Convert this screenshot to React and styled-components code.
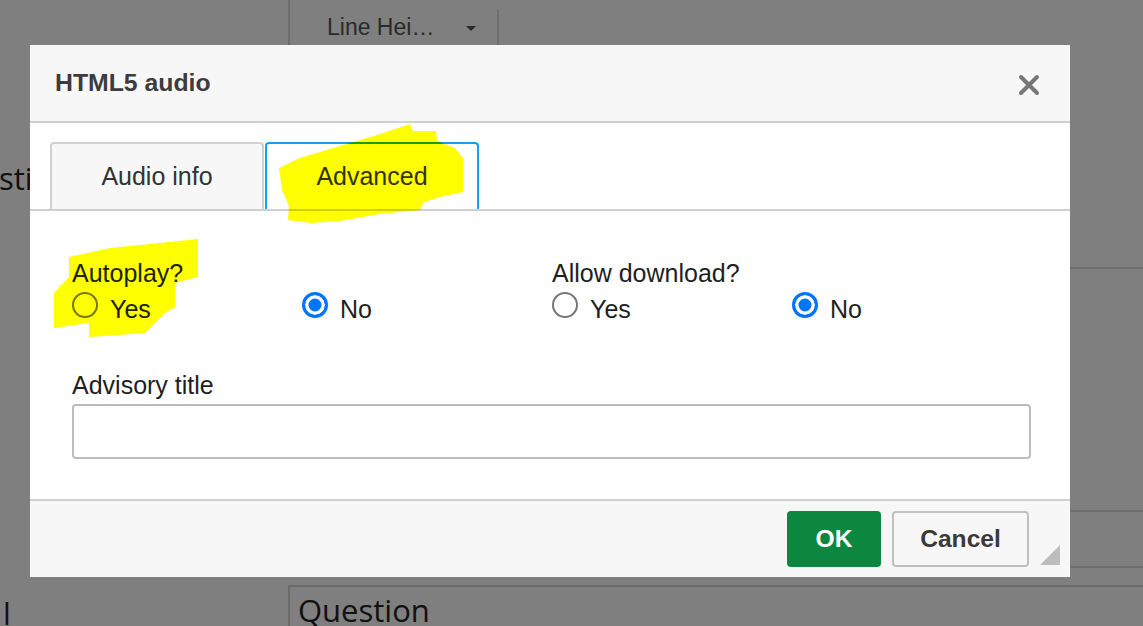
import styled, { createGlobalStyle } from 'styled-components'

const GlobalStyle = createGlobalStyle`
    html, body {
        margin: 0;
        height: 100%;
        overflow: hidden;
        background: #ffffff;
    }
    * {
        box-sizing: border-box;
    }
`

/* ---------- page behind the modal ---------- */

const Page = styled.div`
    display: grid;
    grid-template-columns: 288px 1fr;
    height: 626px;
    background: #ffffff;
    font-family: "Open Sans", sans-serif;
    color: #222;
    overflow: hidden;
`

const Sidebar = styled.aside`
    display: flex;
    flex-direction: column;
    justify-content: space-between;
    padding: 158px 0 0 0;
    font-size: 31px;
    line-height: 40px;
`

const SideText = styled.div`
    margin-left: ${p => p.$indent || 0}px;
    white-space: nowrap;
`

const Main = styled.section`
    display: flex;
    flex-direction: column;
`

const Toolbar = styled.div`
    display: flex;
    height: 45px;
    flex-shrink: 0;
    font-family: "Liberation Sans", Arial, sans-serif;
`

const Separator = styled.div`
    width: 2px;
    margin-top: ${p => p.$offset || 0}px;
    background: #dcdcdc;
`

const Dropdown = styled.div`
    display: flex;
    align-items: flex-start;
    width: 207px;
    padding: 14px 0 0 37px;
    font-size: 23px;
    color: #555;
    gap: 32px;
`

const Caret = styled.span`
    margin-top: 12px;
    width: 0;
    height: 0;
    border-left: 5px solid transparent;
    border-right: 5px solid transparent;
    border-top: 5px solid #555;
`

const Block = styled.div`
    height: ${p => p.$h}px;
    flex-shrink: 0;
    border-bottom: 2px solid #dcdcdc;
`

const QuestionBox = styled.div`
    margin-top: 17px;
    border: 2px solid #d6d6d6;
    border-right: none;
    flex: 1;
    padding: 2px 0 0 8px;
    font-size: 31px;
    color: #222;
`

const Overlay = styled.div`
    position: fixed;
    inset: 0;
    background: rgba(0, 0, 0, 0.5);
`

/* ---------- modal dialog ---------- */

const Dialog = styled.div`
    position: fixed;
    left: 30px;
    top: 45px;
    width: 1040px;
    height: 532px;
    display: flex;
    flex-direction: column;
    background: #ffffff;
    font-family: "Liberation Sans", Arial, sans-serif;
    color: #222;
`

const Header = styled.header`
    display: flex;
    align-items: center;
    justify-content: space-between;
    height: 78px;
    padding: 0 30px 0 25px;
    background: #f7f7f7;
    border-bottom: 2px solid #d0d0d0;
`

const Title = styled.h1`
    margin: 0;
    font-size: 24.8px;
    font-weight: 700;
    color: #3c3c3c;
`

const CloseButton = styled.button`
    display: flex;
    padding: 0;
    margin-top: 4px;
    border: none;
    background: none;
    cursor: pointer;
`

const TabBar = styled.div`
    display: flex;
    gap: 1px;
    padding: 19px 0 0 20px;
    border-bottom: 2px solid #d0d0d0;
`

const Tab = styled.button`
    width: 214px;
    height: 67px;
    display: flex;
    align-items: center;
    justify-content: center;
    border: 2px solid ${p => (p.$active ? '#149ff5' : '#d0d0d0')};
    border-bottom: none;
    border-radius: 4px 4px 0 0;
    background: ${p => (p.$active ? '#ffffff' : '#f7f7f7')};
    font-family: inherit;
    font-size: 25px;
    color: #333;
    cursor: pointer;
`

const Content = styled.div`
    flex: 1;
    padding: 48px 39px 0 42px;
`

const FieldRow = styled.div`
    display: grid;
    grid-template-columns: 480px 1fr;
`

const Label = styled.div`
    font-size: 25px;
    line-height: 28px;
    color: #1e1e1e;
`

const Options = styled.div`
    display: grid;
    grid-template-columns: ${p => p.$split}px 1fr;
    margin-top: 5px;
`

const Option = styled.label`
    display: flex;
    align-items: flex-end;
    font-size: 25px;
    line-height: 28px;
    color: #1e1e1e;
`

const Radio = styled.input.attrs({ type: 'radio' })`
    appearance: none;
    width: 26px;
    height: 26px;
    margin: 0 12px 5px 0;
    border: 2px solid #767676;
    border-radius: 50%;
    background: #ffffff;
    flex-shrink: 0;

    &:checked {
        border: 3px solid #0075ff;
        background: #0075ff;
        box-shadow: inset 0 0 0 3.5px #ffffff;
    }
`

const TitleField = styled.div`
    margin-top: 48px;
`

const TextInput = styled.input`
    display: block;
    width: 959px;
    height: 55px;
    margin-top: 5px;
    border: 2px solid #bdbdbd;
    border-radius: 4px;
    font-size: 22px;
    padding: 0 12px;
`

const Footer = styled.footer`
    position: relative;
    display: flex;
    align-items: center;
    justify-content: flex-end;
    gap: 11px;
    height: 78px;
    padding: 0 41px 0 0;
    background: #f7f7f7;
    border-top: 2px solid #d0d0d0;
`

const Button = styled.button`
    height: 56px;
    width: ${p => (p.$primary ? 94 : 137)}px;
    border: ${p => (p.$primary ? 'none' : '2px solid #c0c0c0')};
    border-radius: 4px;
    background: ${p => (p.$primary ? '#0b873f' : '#f7f7f7')};
    color: ${p => (p.$primary ? '#ffffff' : '#3a3a3a')};
    font-family: inherit;
    font-size: 24.6px;
    font-weight: 700;
    cursor: pointer;
`

const Grip = styled.div`
    position: absolute;
    right: 10px;
    bottom: 12px;
    width: 20px;
    height: 20px;
    background: #bdbdbd;
    clip-path: polygon(100% 0, 100% 100%, 0 100%);
`

const Highlight = styled.svg`
    position: fixed;
    inset: 0;
    width: 1143px;
    height: 626px;
    pointer-events: none;
    mix-blend-mode: multiply;
`

function RadioGroup({ label, name, split, value }) {
    return (
        <div>
            <Label>{label}</Label>
            <Options $split={split}>
                <Option>
                    <Radio name={name} defaultChecked={value === 'yes'} />
                    Yes
                </Option>
                <Option>
                    <Radio name={name} defaultChecked={value === 'no'} />
                    No
                </Option>
            </Options>
        </div>
    )
}

export default function App() {
    return (
        <>
            <GlobalStyle />
            <Page>
                <Sidebar>
                    <SideText $indent={-1}>stic</SideText>
                    <SideText $indent={3}>l</SideText>
                </Sidebar>
                <Main>
                    <Toolbar>
                        <Separator />
                        <Dropdown>
                            <span>Line Hei…</span>
                            <Caret />
                        </Dropdown>
                        <Separator $offset={10} />
                    </Toolbar>
                    <Block $h={224} />
                    <Block $h={243} />
                    <Block $h={56} />
                    <QuestionBox>Question</QuestionBox>
                </Main>
            </Page>
            <Overlay />

            <Dialog>
                <Header>
                    <Title>HTML5 audio</Title>
                    <CloseButton aria-label="Close">
                        <svg width="22" height="22" viewBox="0 0 22 22">
                            <path d="M3 3 L19 19 M19 3 L3 19" stroke="#777" strokeWidth="4" strokeLinecap="round" />
                        </svg>
                    </CloseButton>
                </Header>

                <TabBar>
                    <Tab>Audio info</Tab>
                    <Tab $active>Advanced</Tab>
                </TabBar>

                <Content>
                    <FieldRow>
                        <RadioGroup label="Autoplay?" name="autoplay" split={230} value="no" />
                        <RadioGroup label="Allow download?" name="download" split={240} value="no" />
                    </FieldRow>
                    <TitleField>
                        <Label>Advisory title</Label>
                        <TextInput type="text" />
                    </TitleField>
                </Content>

                <Footer>
                    <Button $primary>OK</Button>
                    <Button>Cancel</Button>
                    <Grip />
                </Footer>
            </Dialog>

            <Highlight viewBox="0 0 1143 626">
                <path
                    fill="#ffff00"
                    d="M279 168 L300 158 L340 146 L380 134 L410 124 L413 131 L436 131 L437 141 L455 148 L463 158 L463 192 L440 197 L424 202 L420 210 L380 214 L340 221 L312 223 L288 220 L289 206 L282 190 Z"
                />
                <path
                    fill="#ffff00"
                    d="M69 257 L110 248 L150 244 L198 239 L198 277 L175 283 L175 307 L165 313 L145 333 L118 335 L89 337 L89 323 L54 328 L54 293 L69 277 Z"
                />
            </Highlight>
        </>
    )
}
